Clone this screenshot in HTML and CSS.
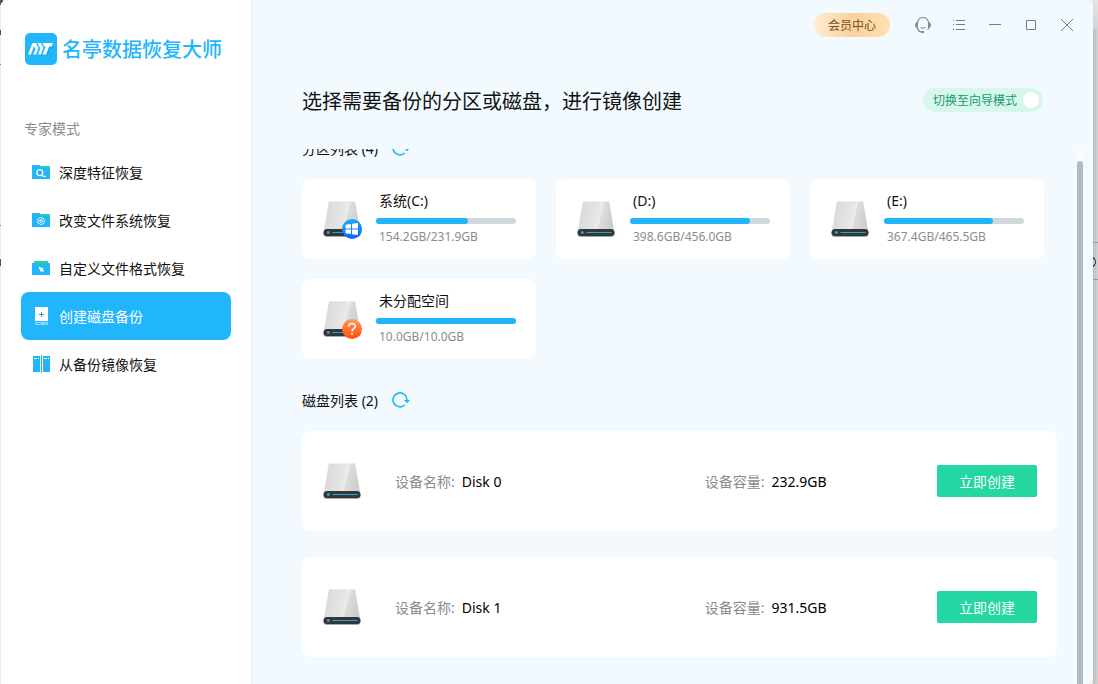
FILE: index.html
```html
<!DOCTYPE html>
<html lang="zh-CN">
<head>
<meta charset="utf-8">
<title>名亭数据恢复大师</title>
<link rel="stylesheet" href="styles.css">
</head>
<body>
<svg class="defs" aria-hidden="true">
  <defs>
    <linearGradient id="metal" x1="0" y1="0" x2="1" y2="0.2">
      <stop offset="0" stop-color="#d6d6d6"/><stop offset="0.6" stop-color="#e6e6e6"/><stop offset="0.68" stop-color="#ececec"/><stop offset="0.74" stop-color="#dcdcdc"/><stop offset="1" stop-color="#cfcfcf"/>
    </linearGradient>
    <linearGradient id="blueBadge" x1="0" y1="0" x2="0.3" y2="1">
      <stop offset="0" stop-color="#1fb4fb"/><stop offset="1" stop-color="#0a68ff"/>
    </linearGradient>
    <linearGradient id="orangeBadge" x1="0" y1="0" x2="0" y2="1">
      <stop offset="0" stop-color="#ff9a55"/><stop offset="1" stop-color="#ff4e08"/>
    </linearGradient>
    <symbol id="drive" viewBox="0 0 38 36">
      <path d="M7.500 0H30.500Q32 0 32.300 1.500L37 29H1L5.700 1.500Q6 0 7.500 0Z" fill="url(#metal)"/>
      <path d="M7.500 0.500H30.500" stroke="#efefef"/>
      <rect x="0.500" y="29.200" width="37" height="6.800" rx="3.400" fill="#a4a8a8"/>
      <rect x="0.500" y="28" width="37" height="7" rx="3.500" fill="#343738"/>
      <rect x="4" y="30.200" width="2.600" height="2.600" rx="1" fill="#23b5ff"/>
      <rect x="9.500" y="31" width="25" height="1" fill="#2aa1d8"/>
    </symbol>
    <symbol id="refresh" viewBox="0 0 18 16">
      <path d="M15 8.500V8A7 7 0 1 0 12.800 13" fill="none" stroke="#21b6fb" stroke-width="1.600"/>
      <path d="M12 8H18L15 11.200Z" fill="#21b6fb"/>
    </symbol>
  </defs>
</svg>

<div class="app">
  <aside class="sidebar">
    <div class="brand">
      <svg width="32" height="32" viewBox="0 0 32 32" aria-hidden="true">
        <rect width="32" height="32" rx="5" fill="#21b6fb"/>
        <path d="M17 22.500L19 20L22 14H29L27.500 15.500L25 16L22 22.500ZM13 22.500L16 16L18.500 15L17 22.500Z" fill="#179fe0" opacity="0.700"/>
        <path d="M3 21.500L7 11.200Q7.500 10 8.500 10H11L13.500 15L11 21.500H8.300L10.500 16L9 13L6 21.500Z" fill="#fff"/>
        <path d="M12.500 10H16L18.300 15L16 21.500H13L15.300 15.500Z" fill="#fff"/>
        <path d="M17.500 10H28L26.500 13.500H24.200L21 21.500H17.500L20.700 13.500H19Z" fill="#fff"/>
      </svg>
      <span class="brand-name">名亭数据恢复大师</span>
    </div>
    <p class="mode">专家模式</p>
    <nav class="menu">
      <a class="menu-item" href="#">
        <svg width="18" height="14" viewBox="0 0 18 14" aria-hidden="true">
          <path d="M7 1H18V6H7Z" fill="#22d5a0"/><path d="M0 0H7.500L9.500 3H18V14H0Z" fill="#21b6fb"/>
          <circle cx="7.800" cy="7.600" r="3" fill="none" stroke="#fff" stroke-width="1.200"/><path d="M10 9.800L11.300 11.300H13.800" fill="none" stroke="#fff" stroke-width="1.200"/>
        </svg>
        <span>深度特征恢复</span>
      </a>
      <a class="menu-item" href="#">
        <svg width="18" height="14" viewBox="0 0 18 14" aria-hidden="true">
          <path d="M7 1H18V6H7Z" fill="#22d5a0"/><path d="M0 0H7.500L9.500 3H18V14H0Z" fill="#21b6fb"/>
          <path d="M9 4.300L12.200 6.100V9.900L9 11.700L5.800 9.900V6.100Z" fill="none" stroke="#d9f3ff"/><circle cx="9" cy="8" r="1.300" fill="none" stroke="#fff"/>
        </svg>
        <span>改变文件系统恢复</span>
      </a>
      <a class="menu-item" href="#">
        <svg width="18" height="14" viewBox="0 0 18 14" aria-hidden="true">
          <path d="M2 0H16V4H2Z" fill="#22d5a0"/><path d="M0 2H4L5 3H13L14 2H18V14H0Z" fill="#21b6fb"/>
          <path d="M6.500 5.500L12 7.500L10.500 8.600L12 10.300L11 11.300L9.500 9.700L8.500 11Z" fill="#fff"/>
        </svg>
        <span>自定义文件格式恢复</span>
      </a>
      <a class="menu-item active" href="#" aria-current="page">
        <svg width="18" height="18" viewBox="0 0 18 18" aria-hidden="true">
          <path d="M3 0H16V14H3Z" fill="#fff"/><path d="M9.500 5V10M7 7.500H12" stroke="#21a0d8"/>
          <path d="M3 15H16V18H3Z" fill="#8bdafd"/><path d="M4 16.500H9M13 16.500H14.500" stroke="#35b9f5"/>
        </svg>
        <span>创建磁盘备份</span>
      </a>
      <a class="menu-item" href="#">
        <svg width="18" height="18" viewBox="0 0 18 18" aria-hidden="true">
          <path d="M1 1H8V17H1ZM11 1H18V17H11Z" fill="#21b6fb"/><path d="M9.500 0V18" stroke="#22c795"/>
          <path d="M2 3.500H5M6 3.500H7M12 3.500H15M16 3.500H17" stroke="#fff"/>
        </svg>
        <span>从备份镜像恢复</span>
      </a>
    </nav>
  </aside>

  <main class="main">
    <header class="titlebar">
      <button class="vip" type="button">会员中心</button>
      <div class="window-tools">
        <button type="button" aria-label="客服">
          <svg width="18" height="18" viewBox="0 0 18 18"><path d="M3.500 6C4.500 2.600 6.500 1.500 9 1.500S13.500 2.600 14.500 6M3.500 12C4 14 5 15.500 7 16" fill="none" stroke="#858a8e" stroke-width="1.200"/><path d="M4 5V12.500H2.500V11.500Q1 11 1 9T2.500 6.500ZM14 5V12.500H15.500V11.500Q17 11 17 9T15.500 6.500Z" fill="#858a8e"/><path d="M6.500 11.500Q9 13 11.500 11.500" fill="none" stroke="#858a8e"/><path d="M15 12L13.500 14" stroke="#858a8e"/><rect x="7" y="15" width="3" height="2" fill="#858a8e"/></svg>
        </button>
        <button type="button" aria-label="菜单">
          <svg width="18" height="18" viewBox="0 0 18 18"><path d="M6 4.500H15M6 8.500H15M6 13.500H15M3 4.500H4M3 8.500H4M3 13.500H4" stroke="#668091"/></svg>
        </button>
        <button type="button" aria-label="最小化">
          <svg width="18" height="18" viewBox="0 0 18 18"><path d="M3 8.500H15" stroke="#668091"/></svg>
        </button>
        <button type="button" aria-label="最大化">
          <svg width="18" height="18" viewBox="0 0 18 18"><path d="M4.500 4.500H13.500V13.500H4.500Z" fill="none" stroke="#668091"/></svg>
        </button>
        <button type="button" aria-label="关闭">
          <svg width="18" height="18" viewBox="0 0 18 18"><path d="M3 3L15 15M15 3L3 15" stroke="#668091"/></svg>
        </button>
      </div>
    </header>

    <div class="page-head">
      <h1>选择需要备份的分区或磁盘，进行镜像创建</h1>
      <label class="switch"><span>切换至向导模式</span><input type="checkbox" checked></label>
    </div>

    <div class="viewport">
      <div class="scroller">
        <div class="content">
          <section>
            <div class="section-head">
              <h2>分区列表 (4)</h2>
              <button class="refresh" type="button" aria-label="刷新分区列表"><svg width="18" height="16"><use href="#refresh"/></svg></button>
            </div>
            <div class="partitions">
              <article class="partition">
                <svg class="drive" width="38" height="36" aria-hidden="true"><use href="#drive"/><circle cx="29" cy="28" r="10" fill="url(#blueBadge)"/><path d="M22.500 23.700L28 23V27.500H22.500ZM29 22.800L35 22V27.500H29ZM22.500 28.500H28V33L22.500 32.300ZM29 28.500H35V34L29 33.200Z" fill="#fff"/></svg>
                <div class="usage"><h3>系统(C:)</h3><div class="bar"><div class="fill" style="width:66%"></div></div><p>154.2GB/231.9GB</p></div>
              </article>
              <article class="partition">
                <svg class="drive" width="38" height="36" aria-hidden="true"><use href="#drive"/></svg>
                <div class="usage"><h3>(D:)</h3><div class="bar"><div class="fill" style="width:86%"></div></div><p>398.6GB/456.0GB</p></div>
              </article>
              <article class="partition">
                <svg class="drive" width="38" height="36" aria-hidden="true"><use href="#drive"/></svg>
                <div class="usage"><h3>(E:)</h3><div class="bar"><div class="fill" style="width:78%"></div></div><p>367.4GB/465.5GB</p></div>
              </article>
              <article class="partition">
                <svg class="drive" width="38" height="36" aria-hidden="true"><use href="#drive"/><circle cx="29" cy="28" r="10" fill="url(#orangeBadge)"/><path d="M25.700 25.800C25.700 21.400 32.400 21.500 32.300 25.500C32.200 27.700 29 27.800 29 30.500" fill="none" stroke="#fff" stroke-width="1.500"/><rect x="28.200" y="32" width="1.600" height="1.800" fill="#fff"/></svg>
                <div class="usage"><h3>未分配空间</h3><div class="bar"><div class="fill" style="width:100%"></div></div><p>10.0GB/10.0GB</p></div>
              </article>
            </div>
          </section>
          <section>
            <div class="section-head">
              <h2>磁盘列表 (2)</h2>
              <button class="refresh" type="button" aria-label="刷新磁盘列表"><svg width="18" height="16"><use href="#refresh"/></svg></button>
            </div>
            <div class="disks">
              <article class="disk">
                <svg class="drive" width="38" height="36" aria-hidden="true"><use href="#drive"/></svg>
                <p class="field"><span>设备名称:</span><b>Disk 0</b></p>
                <p class="field"><span>设备容量:</span><b>232.9GB</b></p>
                <button class="create" type="button">立即创建</button>
              </article>
              <article class="disk">
                <svg class="drive" width="38" height="36" aria-hidden="true"><use href="#drive"/></svg>
                <p class="field"><span>设备名称:</span><b>Disk 1</b></p>
                <p class="field"><span>设备容量:</span><b>931.5GB</b></p>
                <button class="create" type="button">立即创建</button>
              </article>
            </div>
          </section>
        </div>
      </div>
      <div class="scrollbar"><div class="thumb"></div></div>
    </div>
  </main>
</div>
</body>
</html>
```

FILE: styles.css
```css
* {
  box-sizing: border-box;
}

body {
  margin: 0;
  height: 100vh;
  overflow: hidden;
  padding: 0 5px 0 1px;
  font-family: "Noto Sans", "Noto Sans CJK SC", sans-serif;
  font-size: 14px;
  line-height: 20px;
  color: #111;
  background:
    linear-gradient(#999, #999) right 242px / 5px 1px no-repeat,
    linear-gradient(#999, #999) right 279px / 5px 1px no-repeat,
    radial-gradient(ellipse 3px 5px at 0 50%, transparent 60%, #444 70%, #444 90%, transparent) right 256px / 5px 12px no-repeat,
    linear-gradient(#555, #555) 0 259px / 1px 7px no-repeat,
    linear-gradient(#4a90e0, #4a90e0) 0 225px / 1px 1px no-repeat,
    linear-gradient(#4a90e0, #4a90e0) 0 64px / 1px 1px no-repeat,
    linear-gradient(#555, #555) 0 30px / 1px 5px no-repeat,
    linear-gradient(120deg, #555 50%, transparent 50%) 0 0 / 4px 5px no-repeat,
    linear-gradient(#e4e4e4, #d4d4d4) right top / 5px 29px no-repeat,
    linear-gradient(to right, #bdbdbd, #d0d0d0) right top / 5px 100% no-repeat,
    #ececec;
}

h1, h2, h3, p {
  margin: 0;
  font-size: inherit;
  font-weight: 400;
}

button {
  border: 0;
  padding: 0;
  font: inherit;
  background: none;
  cursor: pointer;
}

svg {
  display: block;
  flex: none;
}

.defs {
  position: absolute;
  width: 0;
  height: 0;
}

.app {
  display: flex;
  height: 100%;
  overflow: hidden;
  border-radius: 6px;
  border-bottom-left-radius: 0;
  background: #f2faff;
}

.sidebar {
  flex: none;
  width: 251px;
  padding: 33px 20px 0;
  background: #fff;
  border-right: 1px solid #ebf1f5;
}

.brand {
  display: flex;
  align-items: center;
  gap: 5px;
  padding-left: 4px;
}

.brand-name {
  padding-top: 2px;
  font-size: 20px;
  font-weight: 500;
  line-height: 28px;
  color: #21b6fb;
}

.mode {
  padding: 54px 3px 9px;
  color: #8c8c8c;
}

.menu-item {
  display: flex;
  align-items: center;
  gap: 9px;
  height: 48px;
  padding-left: 11px;
  border-radius: 8px;
  color: #111;
  text-decoration: none;
}

.menu-item span {
  padding-top: 2px;
}

.menu-item.active {
  background: #21b6fb;
  color: #fff;
}

.main {
  flex: 1;
  min-width: 0;
  display: flex;
  flex-direction: column;
}

.titlebar {
  display: flex;
  align-items: center;
  justify-content: flex-end;
  gap: 15px;
  height: 50px;
  padding-right: 8px;
}

.vip {
  width: 76px;
  height: 24px;
  padding-top: 2px;
  border-radius: 12px;
  font-size: 12px;
  color: #77501b;
  background: linear-gradient(to right, #ffecd4, #f9d29c 50%, #ffe0b0);
}

.window-tools {
  display: flex;
}

.window-tools button {
  display: grid;
  place-items: center;
  width: 36px;
  height: 36px;
}

.page-head {
  display: flex;
  align-items: center;
  justify-content: space-between;
  padding: 38px 50px 37px;
}

.page-head h1 {
  padding-top: 4px;
  font-size: 20px;
  line-height: 20px;
}

.switch {
  display: flex;
  align-items: center;
  gap: 6px;
  height: 24px;
  padding: 0 4px 0 10px;
  border-radius: 12px;
  font-size: 12px;
  color: #159a6c;
  background: #d7f7ec;
}

.switch span {
  padding-top: 2px;
}

.switch input {
  appearance: none;
  width: 16px;
  height: 16px;
  margin: 0;
  border-radius: 50%;
  background: #fff;
}

.viewport {
  flex: 1;
  min-height: 0;
  display: flex;
  gap: 20px;
  padding: 0 10px 0 50px;
}

.scroller {
  flex: 1;
  min-width: 0;
  overflow: hidden;
}

/* Scrolled far enough that the first heading is half hidden. */
.content {
  display: grid;
  gap: 32px;
  margin-top: -10px;
}

.section-head {
  display: flex;
  align-items: center;
  gap: 14px;
  margin-bottom: 20px;
}

.refresh {
  padding-bottom: 2px;
}

.partitions {
  display: grid;
  grid-template-columns: repeat(auto-fill, 234px);
  gap: 20px;
}

.partition {
  display: flex;
  align-items: center;
  gap: 15px;
  height: 80px;
  padding: 0 20px 0 21px;
  border-radius: 8px;
  background: #fff;
}

.drive {
  overflow: visible;
}

.usage {
  flex: 1;
  padding-bottom: 2px;
}

.usage h3,
.usage p {
  padding-left: 3px;
}

.usage p {
  font-size: 12px;
  line-height: 16px;
  color: #8c8c8c;
}

.bar {
  height: 6px;
  margin: 7px 0 5px;
  border-radius: 3px;
  background: #d0d8dc;
}

.fill {
  height: 100%;
  border-radius: 3px;
  background: #21b6fb;
}

.disks {
  display: grid;
  gap: 26px;
}

.disk {
  display: grid;
  grid-template-columns: 72px 4fr 3fr 100px;
  align-items: center;
  height: 100px;
  padding: 0 20px 0 21px;
  border-radius: 8px;
  background: #fff;
}

.field {
  display: flex;
  gap: 7px;
  padding-top: 2px;
}

.field span {
  color: #8c8c8c;
}

.field b {
  font-weight: 400;
  color: #000;
}

.create {
  height: 32px;
  padding-top: 2px;
  border-radius: 2px;
  color: #fff;
  background: #24d6a1;
}

.scrollbar {
  flex: none;
  width: 6px;
  padding-top: 12px;
  background: #f8fcfe;
}

.thumb {
  height: 100%;
  border-radius: 3px 3px 0 0;
  background: #b1babd;
}
```
